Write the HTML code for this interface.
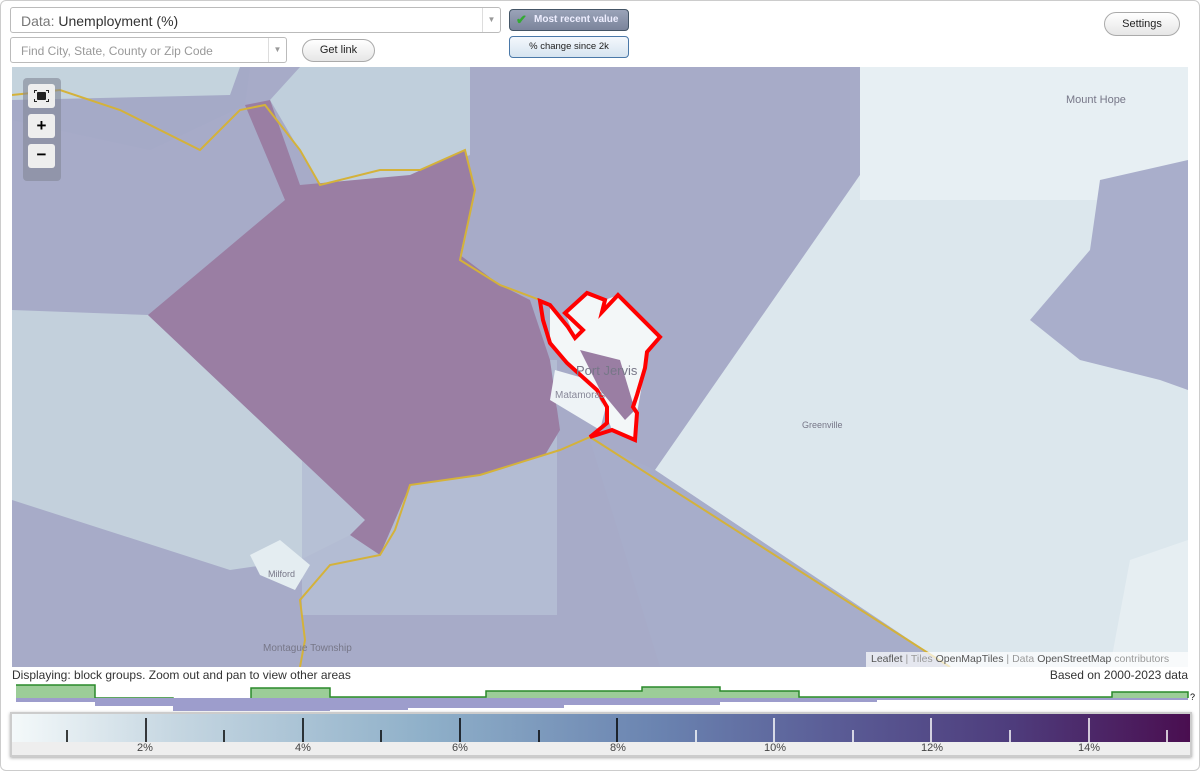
<!DOCTYPE html>
<html><head><meta charset="utf-8"><style>
*{box-sizing:border-box}
body{margin:0;width:1200px;height:771px;background:#fff;font-family:"Liberation Sans",sans-serif;overflow:hidden;position:relative}
.frame{position:absolute;left:0;top:0;width:1200px;height:771px;border:1px solid #ccc;border-radius:6px}
.sel{position:absolute;background:#fff;border:1px solid #bbb;border-radius:3px;color:#999}
.sel .arr{position:absolute;right:0;top:0;bottom:0;width:18px;border-left:1px solid #ddd;color:#999;font-size:8px;text-align:center}
.btn{position:absolute;border:1px solid #aaa;border-radius:12px;background:linear-gradient(#fff,#e6e6e6);font-size:11px;text-align:center;color:#222}
</style></head><body>
<div class="frame"></div>
<div class="sel" style="left:10px;top:7px;width:491px;height:26px;font-size:14px;padding:5px 10px;color:#777">Data: <span style="color:#333">Unemployment (%)</span><div class="arr" style="line-height:24px">▼</div></div>
<div class="sel" style="left:10px;top:37px;width:277px;height:26px;font-size:12px;padding:6px 10px">Find City, State, County or Zip Code<div class="arr" style="line-height:24px">▼</div></div>
<div class="btn" style="left:302px;top:39px;width:73px;height:23px;line-height:21px">Get link</div>
<div style="position:absolute;left:509px;top:9px;width:120px;height:22px;border:1px solid #456;border-radius:4px;background:linear-gradient(#9aa3b8,#7b849b);color:#eef;font-size:10px;font-weight:bold;line-height:20px;padding-left:24px">Most recent value<span style="position:absolute;left:6px;top:0;color:#3a3;font-size:13px">✔</span></div>
<div style="position:absolute;left:509px;top:36px;width:120px;height:22px;border:1px solid #4a78a8;border-radius:4px;background:linear-gradient(#f4f8fc,#d6e4f0);color:#222;font-size:9.5px;line-height:20px;text-align:center">% change since 2k</div>
<div class="btn" style="left:1104px;top:12px;width:76px;height:24px;line-height:22px">Settings</div>

<svg style="position:absolute;left:12px;top:67px" width="1176" height="600" viewBox="12 67 1176 600">
<rect x="12" y="67" width="1176" height="600" fill="#a7abc8"/>
<polygon points="12,67 250,67 245,105 150,150 12,120" fill="#a5aac7"/>
<polygon points="300,67 470,67 470,155 420,175 320,185 270,100" fill="#c0cfdc"/>
<polygon points="12,67 240,67 230,95 12,100" fill="#c4d3dd"/>
<polygon points="12,310 148,315 365,520 350,535 300,560 230,570 12,500" fill="#c3d0dc"/>
<polygon points="302,360 557,360 557,615 302,615" fill="#b5bed4" opacity="0.9"/>
<polygon points="245,105 270,100 300,185 410,175 465,150 475,190 460,255 500,285 530,300 550,360 560,430 545,455 480,475 410,485 380,555 350,535 365,520 148,315 285,200" fill="#9a7ea3"/>
<polygon points="935,67 1188,67 1188,667 950,667 655,470" fill="#dce7ed"/>
<polygon points="860,67 1188,67 1188,200 860,200" fill="#e7eff3"/>
<polygon points="1100,180 1188,160 1188,390 1160,380 1080,360 1030,320 1090,250" fill="#a9aecb"/>
<polygon points="1130,560 1188,540 1188,667 1110,667" fill="#e6eef2"/>
<polygon points="590,440 655,470 950,667 660,667" fill="#a7adca"/>
<polygon points="250,555 280,540 310,565 295,590 260,575" fill="#e4edf1"/>
<polyline points="12,95 60,90 120,110 200,150 240,110 265,105 300,150 320,185 380,170 420,170 465,150 475,190 460,260 500,285 540,300" fill="none" stroke="#d4b23a" stroke-width="2"/>
<polyline points="590,437 560,450 480,475 410,485 395,530 380,555 330,565 300,600 305,640 300,667" fill="none" stroke="#d4b23a" stroke-width="2"/>
<line x1="590" y1="437" x2="950" y2="667" stroke="#d4b23a" stroke-width="2"/>
<polygon points="550,343 567,363 597,390 612,430 635,440 637,413 645,368 647,352 660,337 618,295 605,300 587,293 565,313 575,338 568,327 550,305" fill="#f3f7f8"/>
<polygon points="580,350 620,360 635,410 625,420 600,390" fill="#9a7ea3"/>
<polygon points="555,370 590,380 605,410 600,430 550,400" fill="#eef3f6"/>
<polygon points="540,301 550,305 568,327 575,338 583,330 565,313 587,293 605,300 602,312 618,295 660,337 647,352 645,368 637,395 633,407 637,413 635,440 612,430 590,437 607,423 607,407 597,390 567,363 550,343 543,320" fill="none" stroke="#f00" stroke-width="4" stroke-linejoin="miter"/>
<text x="576" y="375" font-size="13" fill="#778">Port Jervis</text>
<text x="555" y="398" font-size="10" fill="#889">Matamoras</text>
<text x="1066" y="103" font-size="11" fill="#778">Mount Hope</text>
<text x="802" y="428" font-size="9" fill="#778">Greenville</text>
<text x="268" y="577" font-size="9" fill="#778">Milford</text>
<text x="263" y="651" font-size="10" fill="#778">Montague Township</text>
</svg>
<div style="position:absolute;left:23px;top:78px;width:38px;height:103px;background:rgba(130,135,150,0.6);border-radius:4px"></div>
<div style="position:absolute;left:28px;top:84px;width:27px;height:24px;background:#eee;border-radius:3px"><svg width="27" height="24"><rect x="9" y="8" width="9" height="8" fill="#222" rx="1"/><path d="M6 6h3v1H7v2H6zM21 6h-3v1h2v2h1zM6 18h3v-1H7v-2H6zM21 18h-3v-1h2v-2h1z" fill="#222"/></svg></div>
<div style="position:absolute;left:28px;top:114px;width:27px;height:24px;background:#eee;border-radius:3px;text-align:center;font-weight:bold;font-size:17px;line-height:24px">+</div>
<div style="position:absolute;left:28px;top:144px;width:27px;height:24px;background:#eee;border-radius:3px;text-align:center;font-weight:bold;font-size:17px;line-height:22px">−</div>
<div style="position:absolute;left:866px;top:652px;width:322px;height:15px;background:rgba(255,255,255,0.7);font-size:10.5px;color:#999;padding-left:5px;line-height:15px"><span style="color:#555">Leaflet</span> | Tiles <span style="color:#555">OpenMapTiles</span> | Data <span style="color:#555">OpenStreetMap</span> contributors</div>
<div style="position:absolute;left:12px;top:668px;font-size:12px;color:#333">Displaying: block groups. Zoom out and pan to view other areas</div>
<div style="position:absolute;right:12px;top:668px;font-size:12px;color:#333">Based on 2000-2023 data</div>
<svg style="position:absolute;left:0;top:680px" width="1200" height="35">
<polygon points="16,5 95,5 95,18 173,18 173,20 251,20 251,8 330,8 330,17 486,17 486,11 642,11 642,7 720,7 720,11 799,11 799,17 1112,17 1112,12 1188,12 1188,18 16,18" fill="#9ccd98"/>
<polyline points="16,5 95,5 95,18 173,18 173,20 251,20 251,8 330,8 330,17 486,17 486,11 642,11 642,7 720,7 720,11 799,11 799,17 1112,17 1112,12 1188,12 1188,18" fill="none" stroke="#2a8a2a" stroke-width="1.5"/>
<polygon points="16,18 1188,18 1188,20 877,20 877,22 720,22 720,25 564,25 564,28 408,28 408,30 330,30 330,31 173,31 173,26 95,26 95,22 16,22" fill="#9d9dcc"/>
<text x="1190" y="20" font-size="9">?</text>
</svg>
<div style="position:absolute;left:10px;top:712px;width:1182px;height:45px;border:2px solid #ccc;box-shadow:0 1px 3px #aaa;background:#eee">
<div style="height:28px;background:linear-gradient(90deg,#f4f9fa,#c5d6e1 14%,#8fb0c9 35%,#6a83b0 55%,#5a5c96 70%,#4e3c7c 85%,#4a0e50)"></div>
<div style="position:relative;font-size:11px;color:#444">
<span style="position:absolute;left:125px;top:0">2%</span><span style="position:absolute;left:283px;top:0">4%</span><span style="position:absolute;left:440px;top:0">6%</span><span style="position:absolute;left:598px;top:0">8%</span><span style="position:absolute;left:752px;top:0">10%</span><span style="position:absolute;left:909px;top:0">12%</span><span style="position:absolute;left:1066px;top:0">14%</span></div>
<svg style="position:absolute;left:0;top:0" width="1178" height="28">
<g stroke="#000" stroke-width="1.5"><line x1="55" y1="16" x2="55" y2="28"/><line x1="134" y1="4" x2="134" y2="28"/><line x1="212" y1="16" x2="212" y2="28"/><line x1="291" y1="4" x2="291" y2="28"/><line x1="369" y1="16" x2="369" y2="28"/><line x1="448" y1="4" x2="448" y2="28"/><line x1="527" y1="16" x2="527" y2="28"/><line x1="605" y1="4" x2="605" y2="28"/></g>
<g stroke="#fff" stroke-width="1.5"><line x1="684" y1="16" x2="684" y2="28"/><line x1="762" y1="4" x2="762" y2="28"/><line x1="841" y1="16" x2="841" y2="28"/><line x1="919" y1="4" x2="919" y2="28"/><line x1="998" y1="16" x2="998" y2="28"/><line x1="1077" y1="4" x2="1077" y2="28"/><line x1="1155" y1="16" x2="1155" y2="28"/></g>
</svg>
</div>
</body></html>
